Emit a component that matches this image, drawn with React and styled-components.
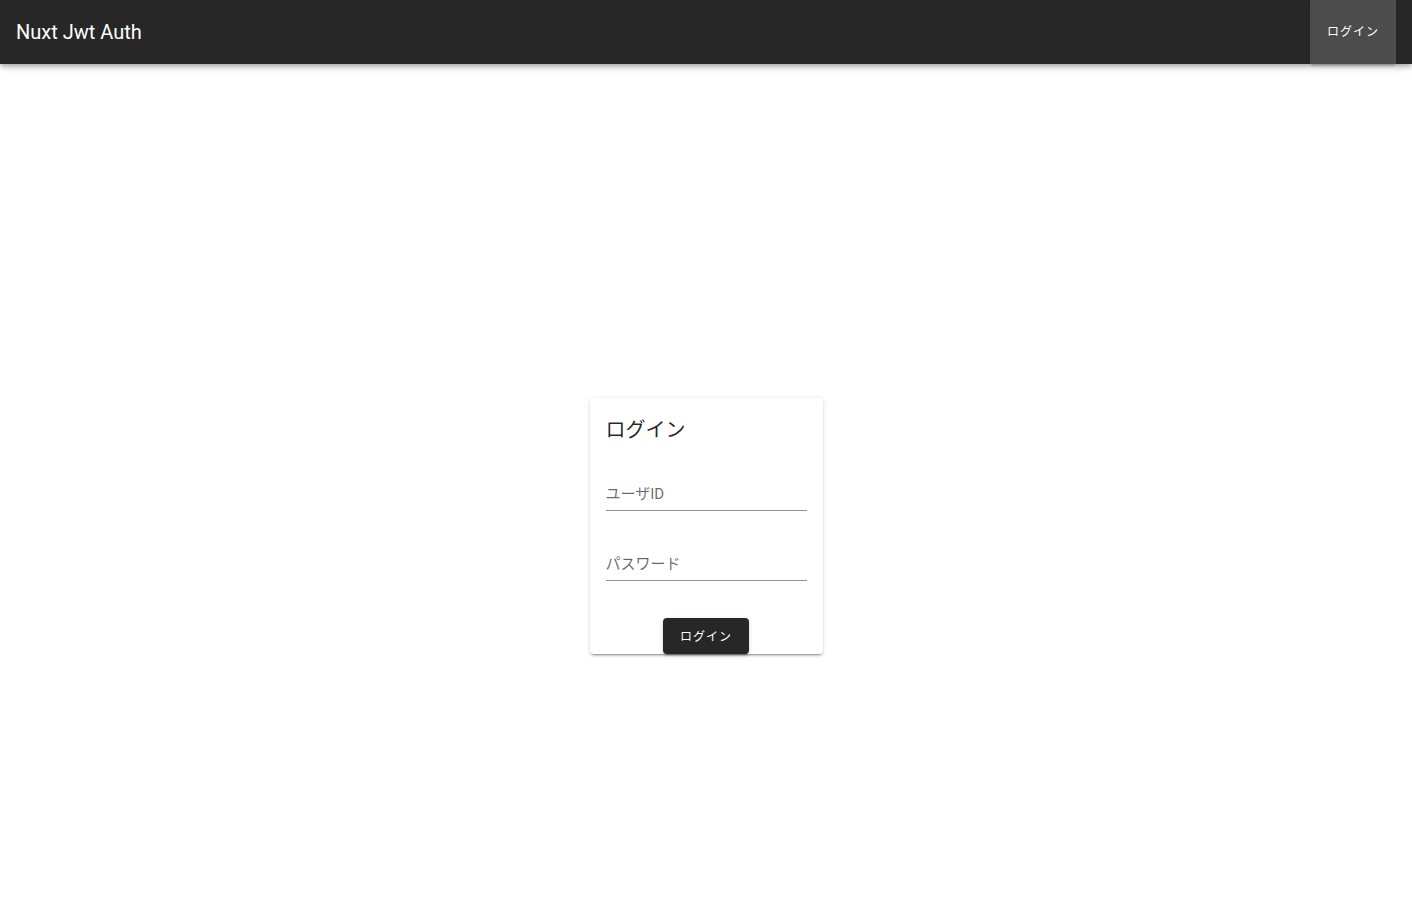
import React from "react";
import styled, { createGlobalStyle } from "styled-components";

const GlobalStyle = createGlobalStyle`
  html, body {
    margin: 0;
    padding: 0;
    background: #ffffff;
    font-family: Roboto, "Noto Sans CJK JP", sans-serif;
  }
`;

const jp = `Roboto, "Noto Sans CJK JP", sans-serif`;

function App() {
    return (
        <>
            <GlobalStyle />
            <Page>
                <AppBar>
                    <Title>Nuxt Jwt Auth</Title>
                    <Spacer />
                    <BarButton>ログイン</BarButton>
                </AppBar>
                <Main>
                    <Card>
                        <CardTitle>ログイン</CardTitle>
                        <Form>
                            <Field>
                                <InputSlot>
                                    <Label>ユーザID</Label>
                                </InputSlot>
                            </Field>
                            <Field>
                                <InputSlot>
                                    <Label>パスワード</Label>
                                </InputSlot>
                            </Field>
                        </Form>
                        <Actions>
                            <SubmitButton>ログイン</SubmitButton>
                        </Actions>
                    </Card>
                </Main>
            </Page>
        </>
    );
}

const Page = styled.div`
  min-height: 900px;
  display: flex;
  flex-direction: column;
`;

const AppBar = styled.header`
  height: 64px;
  background-color: #272727;
  display: flex;
  align-items: center;
  padding: 0 16px;
  box-sizing: border-box;
  position: relative;
  z-index: 2;
  box-shadow: 0 2px 4px -1px rgba(0, 0, 0, 0.2), 0 4px 5px 0 rgba(0, 0, 0, 0.14),
    0 1px 10px 0 rgba(0, 0, 0, 0.12);
`;

const Title = styled.div`
  color: #ffffff;
  font-family: ${jp};
  font-size: 20px;
  line-height: 1.5;
  letter-spacing: 0;
`;

const Spacer = styled.div`
  flex: 1;
`;

const BarButton = styled.div`
  height: 64px;
  width: 86px;
  box-sizing: border-box;
  padding-bottom: 4px;
  display: flex;
  align-items: center;
  justify-content: center;
  background-color: #4c4c4c;
  color: #ffffff;
  font-family: ${jp};
  font-size: 12px;
  letter-spacing: 1px;
  box-shadow: 0 2px 3px -1px rgba(0, 0, 0, 0.3);
`;

const Main = styled.main`
  display: flex;
  justify-content: center;
  padding-top: 334px;
`;

const Card = styled.div`
  width: 233px;
  background: #ffffff;
  border-radius: 4px;
  box-shadow: 0 3px 1px -2px rgba(0, 0, 0, 0.2), 0 2px 2px 0 rgba(0, 0, 0, 0.14),
    0 1px 5px 0 rgba(0, 0, 0, 0.12);
  display: flex;
  flex-direction: column;
`;

const CardTitle = styled.div`
  padding: 16px 16px 0;
  height: 32px;
  line-height: 32px;
  font-family: ${jp};
  font-size: 20px;
  color: rgba(0, 0, 0, 0.87);
`;

const Form = styled.div`
  display: flex;
  flex-direction: column;
  gap: 37px;
  padding: 32px 16px 0;
`;

const Field = styled.div`
  display: flex;
`;

const InputSlot = styled.div`
  flex: 1;
  height: 32px;
  border-bottom: 1px solid rgba(0, 0, 0, 0.42);
  display: flex;
  align-items: center;
`;

const Label = styled.span`
  font-family: ${jp};
  font-size: 15px;
  line-height: 20px;
  color: rgba(0, 0, 0, 0.6);
`;

const Actions = styled.div`
  display: flex;
  justify-content: center;
  padding-top: 37px;
`;

const SubmitButton = styled.div`
  width: 86px;
  height: 36px;
  box-sizing: border-box;
  padding-bottom: 2px;
  border-radius: 4px;
  background-color: #272727;
  color: #ffffff;
  font-family: ${jp};
  font-size: 12px;
  letter-spacing: 1px;
  display: flex;
  align-items: center;
  justify-content: center;
  box-shadow: 0 3px 1px -2px rgba(0, 0, 0, 0.2), 0 2px 2px 0 rgba(0, 0, 0, 0.14),
    0 1px 5px 0 rgba(0, 0, 0, 0.12);
`;

export default App;
